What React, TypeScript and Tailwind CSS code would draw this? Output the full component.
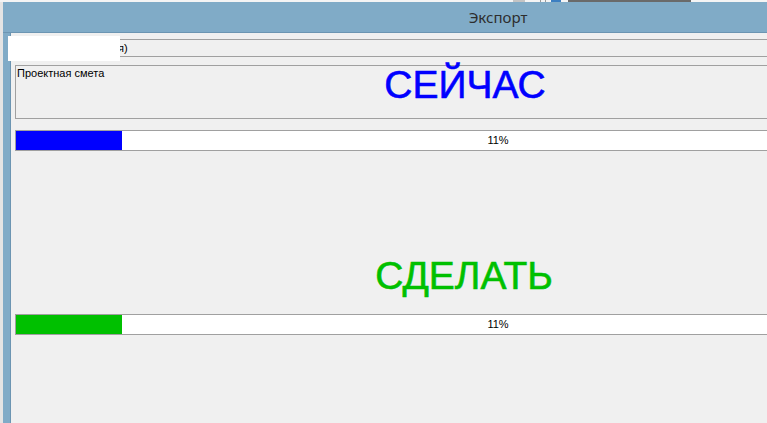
const percent = 11

function ProgressBar({ color }: { color: string }) {
  return (
    <div className="relative h-[21px] w-full border border-[#a0a0a0] bg-white">
      <div className={`h-full ${color}`} style={{ width: `${percent}%` }} />
      <div className="absolute inset-0 flex items-center justify-center text-[11px] leading-[13px] text-black">
        {percent}%
      </div>
    </div>
  )
}

export default function App() {
  return (
    <div
      className="relative h-[423px] w-[767px] overflow-hidden bg-[#e4e4e4]"
      style={{ fontFamily: '"Liberation Sans", Arial, sans-serif' }}
    >
      {/* window behind */}
      <div className="flex h-[2px] bg-[#f4f4f4]">
        <div className="ml-[513px] w-[12px] bg-[#c4c4c4]" />
        <div className="ml-[15px] w-px bg-[#9a9a9a]" />
        <div className="ml-[4px] w-px bg-[#9a9a9a]" />
        <div className="ml-[5px] w-[10px] bg-[#3d7fc1]" />
        <div className="ml-[7px] w-[123px] bg-[#6a6a6a]" />
      </div>

      {/* window */}
      <div className="ml-[3px] w-[990px]">
        {/* title bar */}
        <div className="flex h-[31px] items-center justify-center border-b border-[#6c95b2] bg-[#80abc7]">
          <span
            className="text-[15px] leading-none text-[#2d2d2d]"
            style={{ fontFamily: '"Noto Sans", "Open Sans", sans-serif' }}
          >
            Экспорт
          </span>
        </div>

        <div className="flex h-[400px]">
          <div className="w-[8px] border-r border-[#6c95b2] bg-[#80abc7]" />

          <div className="flex flex-1 flex-col bg-[#f0f0f0] px-[4px]">
            {/* field */}
            <div className="mt-[6px] flex h-[18px] items-center border border-[#a0a0a0] pl-[102px] text-[11px] leading-[13px] text-black">
              я)
            </div>

            {/* group box */}
            <div className="relative mt-[8px] h-[54px] border border-[#a0a0a0] pl-[1px] pt-[1px]">
              <div className="text-[11px] leading-[13px] text-black">Проектная смета</div>
              <div className="absolute left-0 right-0 top-0 pr-[66px] text-center text-[39px] leading-[38px] text-[#0000ff] [-webkit-text-stroke:0.6px_#0000ff]">
                СЕЙЧАС
              </div>
            </div>

            <div className="mt-[11px]">
              <ProgressBar color="bg-[#0000ff]" />
            </div>

            <div className="mt-[106px] h-[38px] pr-[68px] text-center text-[39px] leading-[38px] text-[#00c000] [-webkit-text-stroke:0.6px_#00c000]">
              СДЕЛАТЬ
            </div>

            <div className="mt-[19px]">
              <ProgressBar color="bg-[#00c000]" />
            </div>
          </div>

          <div className="w-[8px] border-l border-[#6c95b2] bg-[#80abc7]" />
        </div>
      </div>

      {/* redaction */}
      <div className="absolute left-[8px] top-[36px] h-[25px] w-[112px] bg-white" />
    </div>
  )
}
